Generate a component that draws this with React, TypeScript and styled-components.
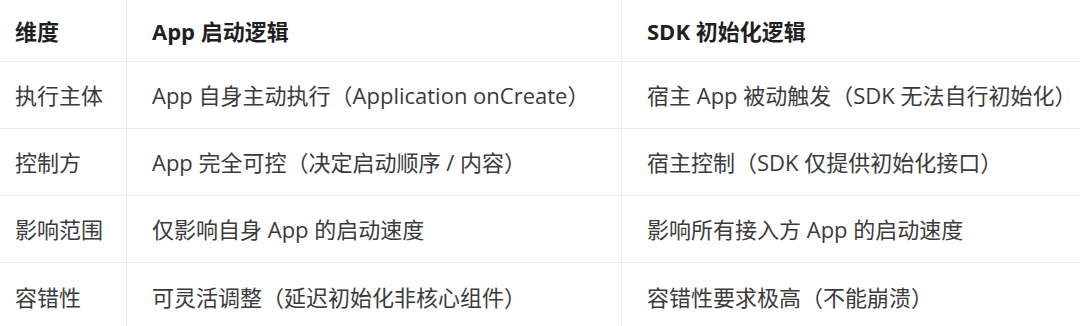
import React from "react";
import styled, { createGlobalStyle } from "styled-components";

const GlobalStyle = createGlobalStyle`
  html, body { margin: 0; padding: 0; background: #ffffff; }
  body { font-family: "Open Sans", "Noto Sans CJK SC", sans-serif; }
`;

const Table = styled.div`
  width: 1080px;
  display: grid;
  grid-template-columns: 126px 495px 1fr;
  background: #ffffff;
`;

const Cell = styled.div<{ $col: number; $head?: boolean; $last?: boolean }>`
  box-sizing: border-box;
  height: ${(p) => (p.$head ? 62 : 67)}px;
  display: flex;
  align-items: center;
  padding-left: ${(p) => (p.$col === 0 ? 15 : 25)}px;
  border-bottom: ${(p) => (p.$last ? "none" : "1px solid #ececec")};
  border-left: ${(p) => (p.$col === 0 ? "none" : "1px solid #ececec")};
  font-size: 22px;
  line-height: 1;
  white-space: nowrap;
  color: ${(p) => (p.$head ? "#1f1f1f" : "#3a3a3a")};
  font-weight: ${(p) => (p.$head ? 700 : 400)};
`;

const head = ["维度", "App 启动逻辑", "SDK 初始化逻辑"];
const rows = [
  ["执行主体", "App 自身主动执行（Application onCreate）", "宿主 App 被动触发（SDK 无法自行初始化）"],
  ["控制方", "App 完全可控（决定启动顺序 / 内容）", "宿主控制（SDK 仅提供初始化接口）"],
  ["影响范围", "仅影响自身 App 的启动速度", "影响所有接入方 App 的启动速度"],
  ["容错性", "可灵活调整（延迟初始化非核心组件）", "容错性要求极高（不能崩溃）"],
];

export default function App() {
  return (
    <>
      <GlobalStyle />
      <Table>
        {head.map((h, i) => (
          <Cell key={h} $col={i} $head>
            {h}
          </Cell>
        ))}
        {rows.map((r, ri) =>
          r.map((c, ci) => (
            <Cell key={`${ri}-${ci}`} $col={ci} $last={ri === rows.length - 1}>
              {c}
            </Cell>
          ))
        )}
      </Table>
    </>
  );
}
